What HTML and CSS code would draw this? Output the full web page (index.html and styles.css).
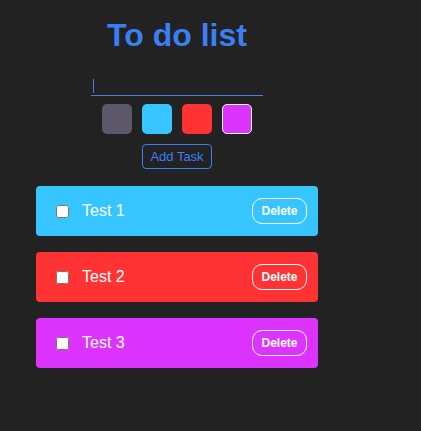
FILE: index.html
```html
<!DOCTYPE html>
<html>
<head>
<meta charset="utf-8">
<link rel="stylesheet" href="styles.css">
</head>
<body>
<div class="app">
  <h1 class="title">To do list</h1>
  <div class="input-wrap"><span class="caret"></span></div>
  <div class="swatches">
    <span class="swatch grey"></span>
    <span class="swatch cyan"></span>
    <span class="swatch red"></span>
    <span class="swatch purple selected"></span>
  </div>
  <button class="add">Add Task</button>
  <ul class="tasks">
    <li class="task cyan"><input type="checkbox" class="check"><span class="label">Test 1</span><button class="del">Delete</button></li>
    <li class="task red"><input type="checkbox" class="check"><span class="label">Test 2</span><button class="del">Delete</button></li>
    <li class="task purple"><input type="checkbox" class="check"><span class="label">Test 3</span><button class="del">Delete</button></li>
  </ul>
</div>
</body>
</html>
```

FILE: styles.css
```css
html, body {
  margin: 0;
  padding: 0;
  background: #222222;
  height: 100%;
}
body {
  font-family: "Liberation Sans", Arial, sans-serif;
}
.app {
  width: 282px;
  margin-left: 36px;
  padding-top: 17px;
  display: flex;
  flex-direction: column;
  align-items: center;
}
.title {
  margin: 0;
  font-size: 32px;
  line-height: 37px;
  font-weight: bold;
  color: #3b7ff5;
}
.input-wrap {
  margin-top: 22px;
  width: 172px;
  height: 19px;
  border-bottom: 1px solid #4a80d6;
  position: relative;
}
.caret {
  position: absolute;
  left: 2px;
  top: 3px;
  width: 1px;
  height: 14px;
  background: #4a80d6;
}
.swatches {
  margin-top: 8px;
  display: flex;
  gap: 10px;
}
.swatch {
  width: 30px;
  height: 30px;
  border-radius: 5px;
  box-sizing: border-box;
}
.swatch.selected {
  border: 1px solid #ffffff;
}
.grey { background: #5c5869; }
.cyan { background: #36c5fe; }
.red { background: #ff3333; }
.purple { background: #dd33ff; }
.add {
  margin-top: 10px;
  height: 25px;
  padding: 0 7px;
  background: transparent;
  border: 1px solid #3b7ff5;
  border-radius: 4px;
  color: #3b7ff5;
  font-family: "Liberation Sans", Arial, sans-serif;
  font-size: 13px;
}
.tasks {
  list-style: none;
  margin: 17px 0 0 0;
  padding: 0;
  width: 282px;
  display: flex;
  flex-direction: column;
  gap: 16px;
}
.task {
  height: 50px;
  border-radius: 4px;
  display: flex;
  align-items: center;
  padding: 0 11px 0 16px;
}
.check {
  width: 13px;
  height: 13px;
  margin: 0 3px 0 4px;
}
.label {
  margin-left: 10px;
  color: #ffffff;
  font-size: 16px;
  flex: 1;
}
.del {
  width: 55px;
  height: 26px;
  padding: 0;
  background: transparent;
  border: 1px solid #ffffff;
  border-radius: 10px;
  color: #ffffff;
  font-family: "Liberation Sans", Arial, sans-serif;
  font-weight: bold;
  font-size: 12px;
}
```
